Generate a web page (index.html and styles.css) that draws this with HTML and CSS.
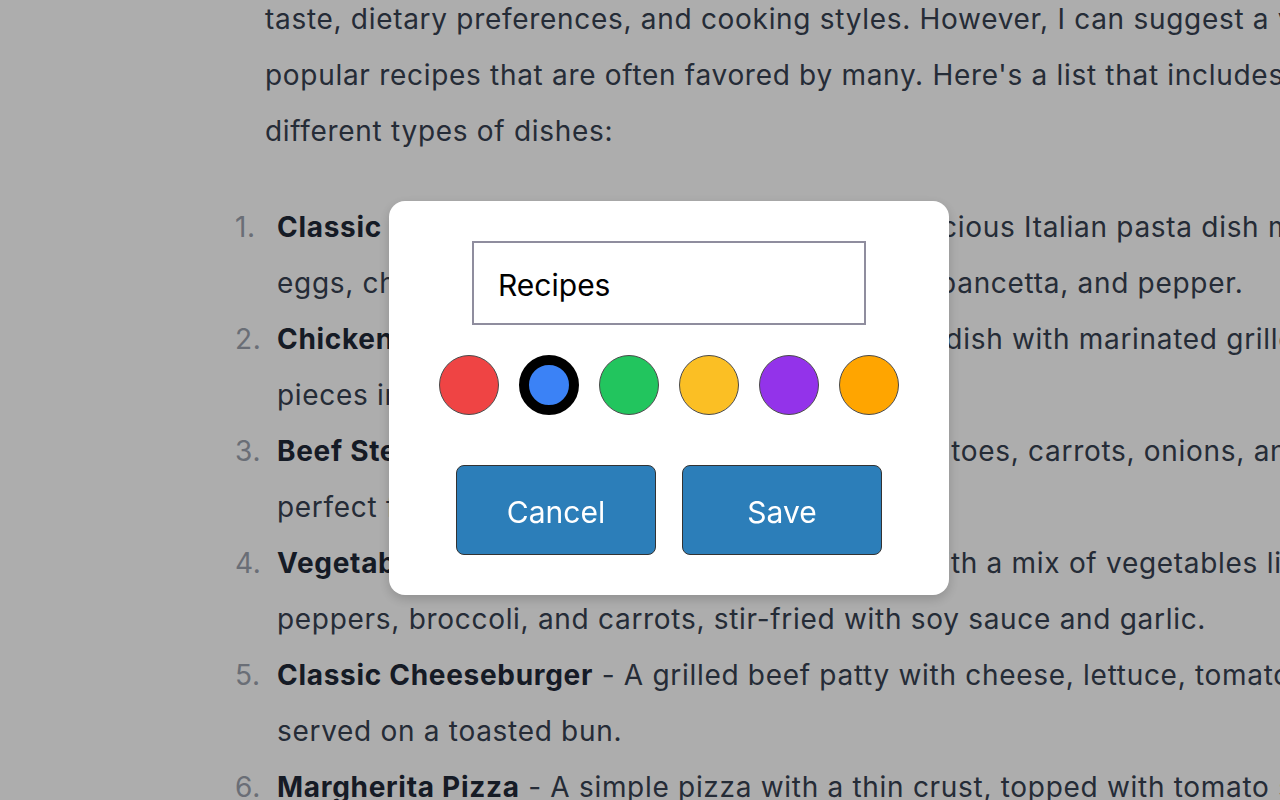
FILE: index.html
```html
<!DOCTYPE html>
<html lang="en">
<head>
<meta charset="utf-8">
<title>Recipes folder</title>
<link rel="stylesheet" href="styles.css">
</head>
<body>
<main class="chat">
  <div class="prose">
    <p>As an AI, I don't have personal preferences, and the best recipes can vary depending on individual<br>taste, dietary preferences, and cooking styles. However, I can suggest a variety of<br>popular recipes that are often favored by many. Here's a list that includes<br>different types of dishes:</p>
    <ol>
      <li><strong>Classic Spaghetti Carbonara</strong> - A very, very delicious Italian pasta dish made with<br>eggs, cheese (Pecorino Romano or Parmesan), pancetta, and pepper.</li>
      <li><strong>Chicken Tikka Masala</strong> - A spicy, popular Indian dish with marinated grilled chicken<br>pieces in a spiced creamy tomato sauce.</li>
      <li><strong>Beef Stew</strong> - A hearty dish with tender beef, potatoes, carrots, onions, and herbs,<br>perfect for cold days.</li>
      <li><strong>Vegetable Stir-Fry</strong> - A healthy and quick dish with a mix of vegetables like bell<br>peppers, broccoli, and carrots, stir-fried with soy sauce and garlic.</li>
      <li><strong>Classic Cheeseburger</strong> - A grilled beef patty with cheese, lettuce, tomatoes, and pickles,<br>served on a toasted bun.</li>
      <li><strong>Margherita Pizza</strong> - A simple pizza with a thin crust, topped with tomato sauce, mozzarella, and basil.</li>
    </ol>
  </div>
</main>

<div class="overlay">
  <div class="modal">
    <input class="name-input" type="text" value="Recipes">
    <div class="swatches">
      <span class="swatch red"></span>
      <span class="swatch blue selected"></span>
      <span class="swatch green"></span>
      <span class="swatch yellow"></span>
      <span class="swatch purple"></span>
      <span class="swatch orange"></span>
    </div>
    <div class="actions">
      <button class="btn" type="button">Cancel</button>
      <button class="btn" type="button">Save</button>
    </div>
  </div>
</div>
</body>
</html>
```
FILE: styles.css
```css
html, body {
  margin: 0;
  padding: 0;
  height: 100%;
  overflow: hidden;
  background: #ffffff;
}

body {
  font-family: Inter, "Noto Sans", sans-serif;
}

.chat {
  padding-left: 265px;
}

.prose {
  margin-top: -65px;
  font-size: 28px;
  line-height: 56px;
  letter-spacing: 0.7px;
  color: #374151;
  white-space: nowrap;
}

.prose p {
  margin: 0 0 40px 0;
}

.prose ol {
  list-style: none;
  counter-reset: item;
  margin: 0 0 0 -30px;
  padding: 0;
}

.prose li {
  counter-increment: item;
  padding-left: 42px;
}

.prose li::before {
  content: counter(item) ".";
  display: inline-block;
  width: 42px;
  margin-left: -42px;
  color: #9ca3af;
}

.prose strong {
  font-weight: 700;
  color: #1f2937;
}

.overlay {
  position: fixed;
  inset: 0;
  background: rgba(0, 0, 0, 0.32);
  display: flex;
  align-items: center;
  justify-content: center;
  padding-left: 58px;
  padding-bottom: 4px;
}

.modal {
  width: 560px;
  box-sizing: border-box;
  background: #ffffff;
  border-radius: 16px;
  padding: 40px 0;
  display: flex;
  flex-direction: column;
  align-items: center;
  box-shadow: 0 4px 12px rgba(0, 0, 0, 0.18);
}

.name-input {
  box-sizing: border-box;
  width: 394px;
  height: 84px;
  margin: 0;
  border: 2px solid #8f8d9e;
  border-radius: 0;
  padding: 3px 24px 0;
  font-family: Inter, "Noto Sans", sans-serif;
  font-size: 30px;
  color: #000000;
  background: #ffffff;
  outline: none;
}

.swatches {
  display: flex;
  gap: 20px;
  margin-top: 30px;
}

.swatch {
  box-sizing: border-box;
  width: 60px;
  height: 60px;
  border-radius: 50%;
  border: 1px solid #4a4a4a;
}

.swatch.selected {
  border: 10px solid #000000;
}

.red { background: #ef4444; }
.blue { background: #3b82f6; }
.green { background: #22c55e; }
.yellow { background: #fbbf24; }
.purple { background: #9333ea; }
.orange { background: #ffa500; }

.actions {
  display: flex;
  gap: 26px;
  margin-top: 50px;
}

.btn {
  width: 200px;
  height: 90px;
  margin: 0;
  padding: 3px 0 0;
  background: #2c7eb9;
  border: 1px solid #333333;
  border-radius: 8px;
  color: #ffffff;
  font-family: Inter, "Noto Sans", sans-serif;
  font-size: 30px;
  cursor: pointer;
}
```
